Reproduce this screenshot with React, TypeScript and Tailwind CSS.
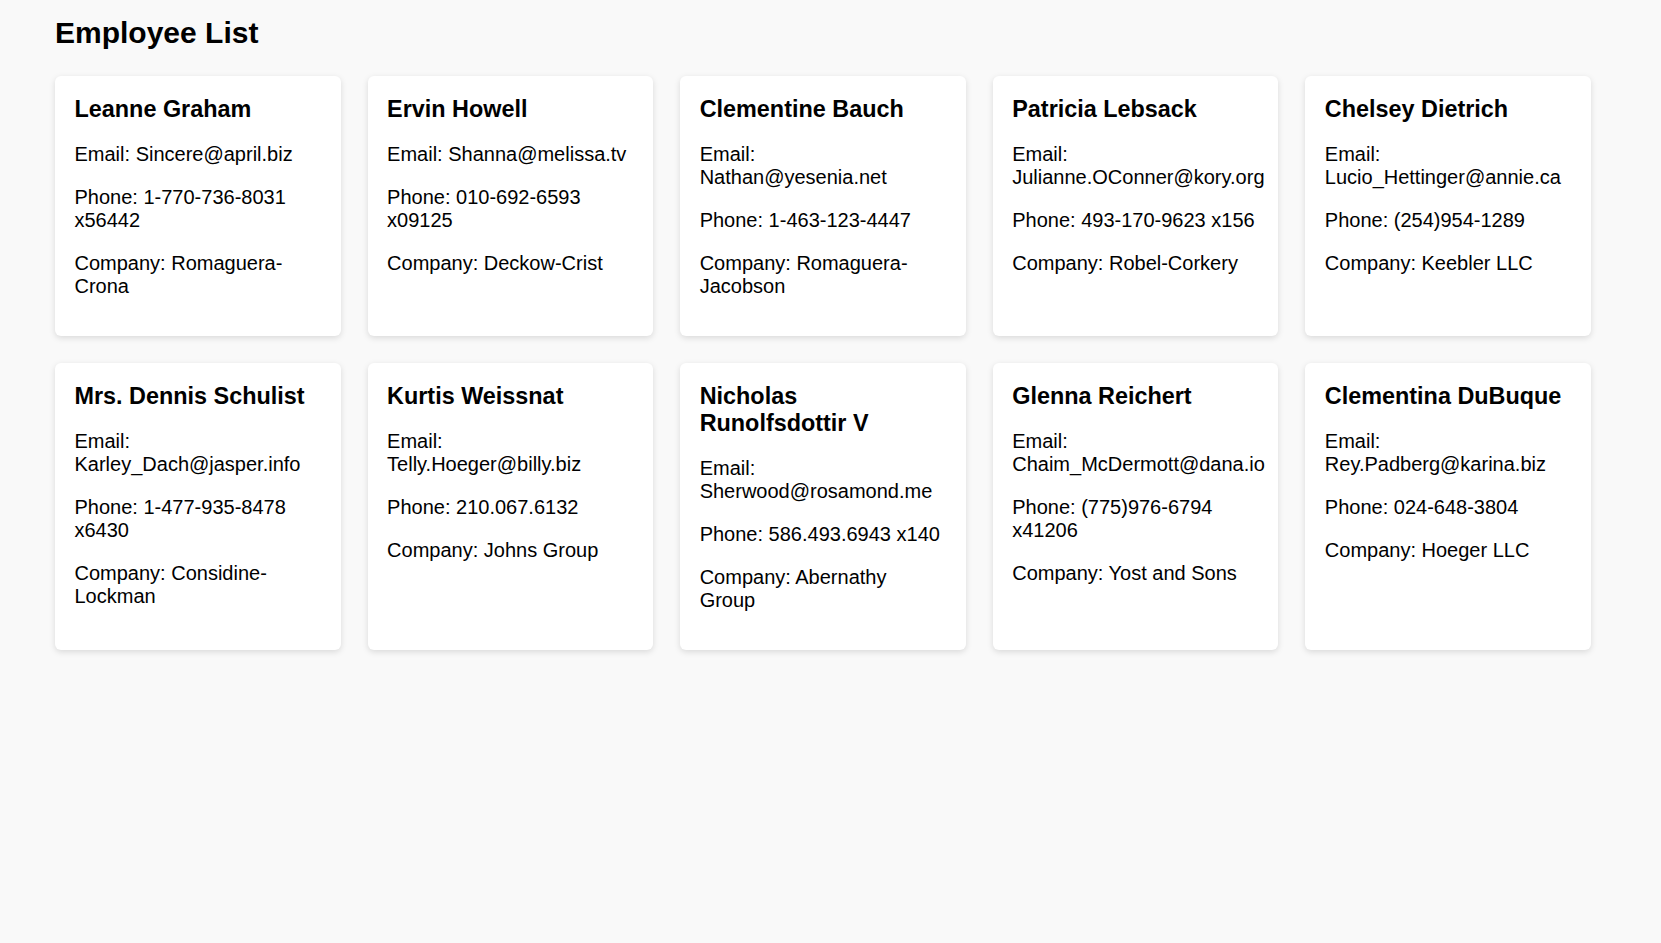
type Employee = {
    id: number;
    name: string;
    email: string;
    phone: string;
    company: string;
};

const employees: Employee[] = [
    { id: 1, name: 'Leanne Graham', email: 'Sincere@april.biz', phone: '1-770-736-8031 x56442', company: 'Romaguera-Crona' },
    { id: 2, name: 'Ervin Howell', email: 'Shanna@melissa.tv', phone: '010-692-6593 x09125', company: 'Deckow-Crist' },
    { id: 3, name: 'Clementine Bauch', email: 'Nathan@yesenia.net', phone: '1-463-123-4447', company: 'Romaguera-Jacobson' },
    { id: 4, name: 'Patricia Lebsack', email: 'Julianne.OConner@kory.org', phone: '493-170-9623 x156', company: 'Robel-Corkery' },
    { id: 5, name: 'Chelsey Dietrich', email: 'Lucio_Hettinger@annie.ca', phone: '(254)954-1289', company: 'Keebler LLC' },
    { id: 6, name: 'Mrs. Dennis Schulist', email: 'Karley_Dach@jasper.info', phone: '1-477-935-8478 x6430', company: 'Considine-Lockman' },
    { id: 7, name: 'Kurtis Weissnat', email: 'Telly.Hoeger@billy.biz', phone: '210.067.6132', company: 'Johns Group' },
    { id: 8, name: 'Nicholas Runolfsdottir V', email: 'Sherwood@rosamond.me', phone: '586.493.6943 x140', company: 'Abernathy Group' },
    { id: 9, name: 'Glenna Reichert', email: 'Chaim_McDermott@dana.io', phone: '(775)976-6794 x41206', company: 'Yost and Sons' },
    { id: 10, name: 'Clementina DuBuque', email: 'Rey.Padberg@karina.biz', phone: '024-648-3804', company: 'Hoeger LLC' },
];

function EmployeeCard({ employee }: { employee: Employee }) {
    return (
        <div className="rounded-[6px] bg-white px-[19.5px] pt-[20px] pb-[18px] shadow-[0_2px_6px_rgba(0,0,0,0.13)]">
            <h3 className="mb-[19.5px] text-[23.4px] font-bold leading-[normal]">{employee.name}</h3>
            <p className="my-5">Email: {employee.email}</p>
            <p className="my-5">Phone: {employee.phone}</p>
            <p className="mt-5">Company: {employee.company}</p>
            <div className="h-5" />
        </div>
    );
}

export default function App() {
    return (
        <div className="min-h-[943px] bg-[#f9f9f9] pl-[55px] pt-[15.5px] font-['Liberation_Sans',Arial,sans-serif] text-[20px] leading-[normal] text-black">
            <h2 className="mb-[26.7px] text-[30px] font-bold leading-[normal]">Employee List</h2>
            {/* Employee cards */}
            <div className="grid grid-cols-[repeat(5,285.7px)] gap-x-[26.9px] gap-y-[26.7px]">
                {employees.map((employee) => (
                    <EmployeeCard key={employee.id} employee={employee} />
                ))}
            </div>
        </div>
    );
}
